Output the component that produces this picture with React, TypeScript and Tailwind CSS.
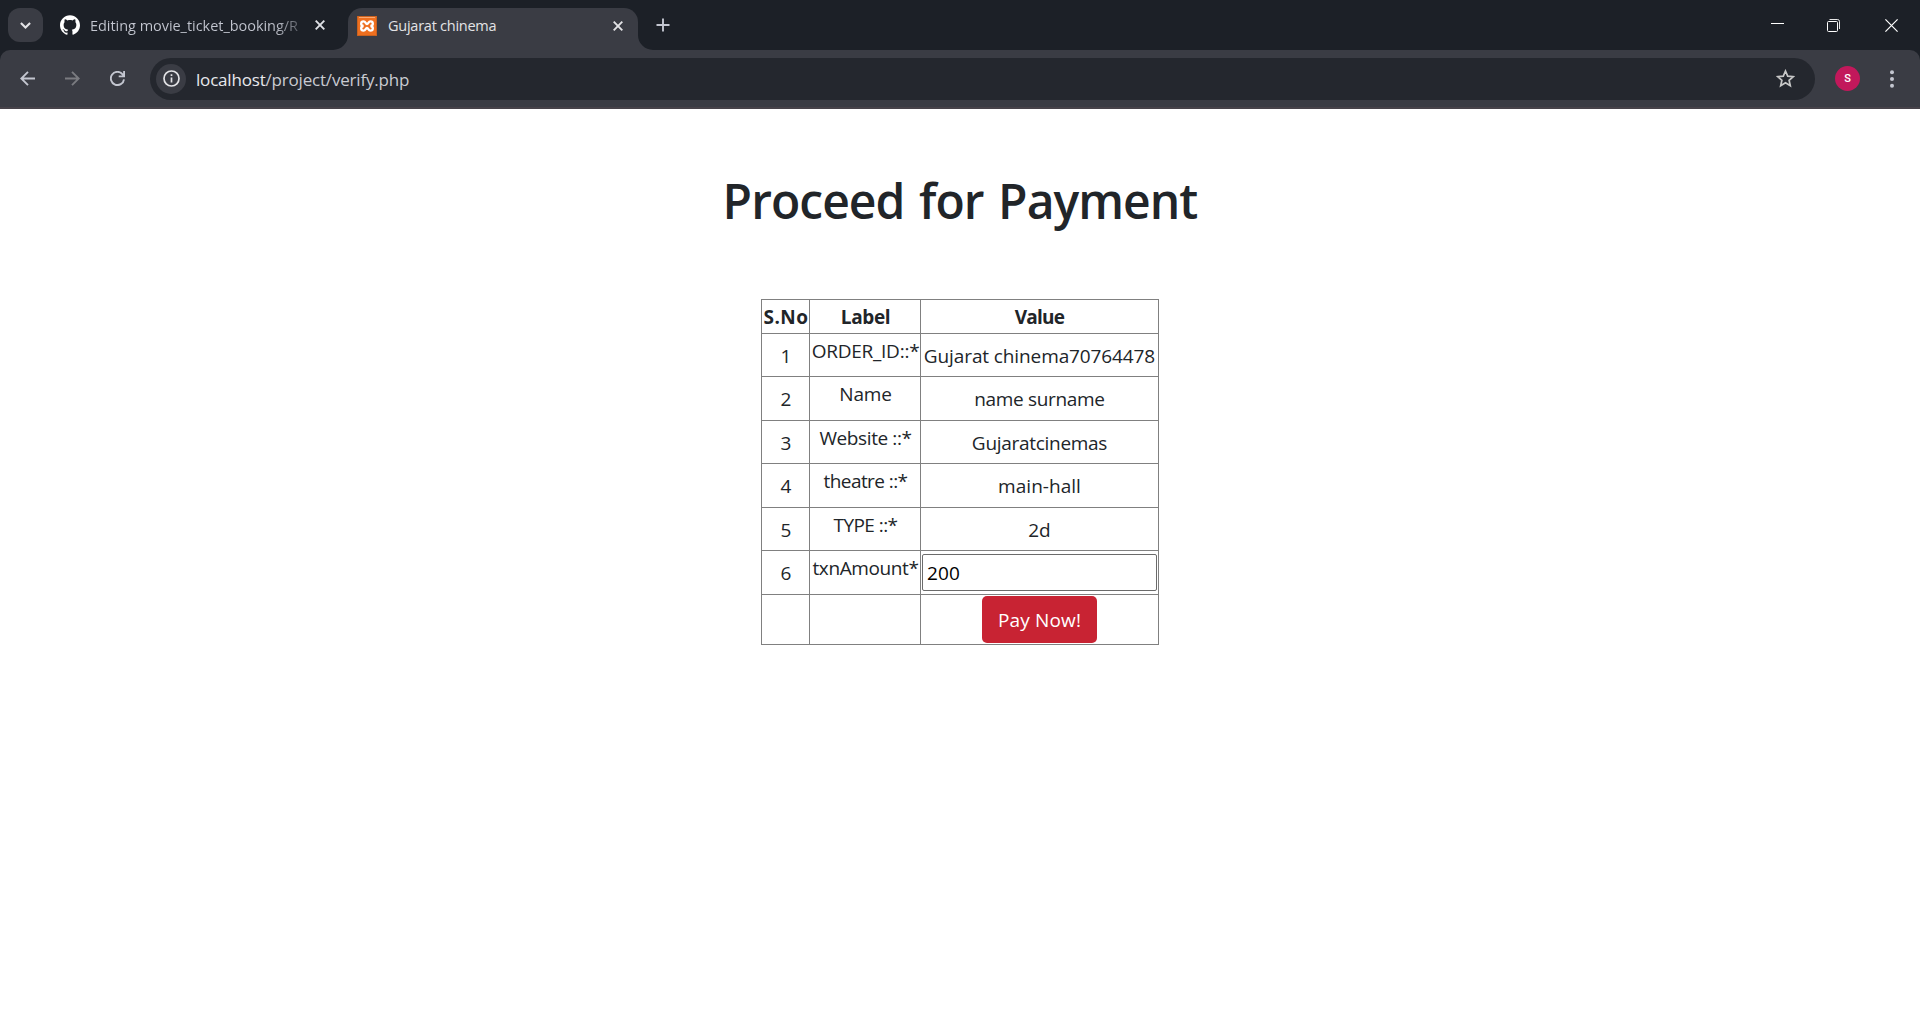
import { SiGithub } from "react-icons/si";

type Row = {
  no: string;
  label: string;
  labelTrack: string;
  value: string;
  valueTrack: string;
  height: string;
};

const rows: Row[] = [
  { no: "1", label: "ORDER_ID::*", labelTrack: "tracking-[-0.25px]", value: "Gujarat chinema70764478", valueTrack: "tracking-[-0.11px]", height: "h-[43px] pt-px" },
  { no: "2", label: "Name", labelTrack: "tracking-[-0.15px]", value: "name surname", valueTrack: "tracking-[-0.33px]", height: "h-11" },
  { no: "3", label: "Website ::*", labelTrack: "tracking-[-0.4px]", value: "Gujaratcinemas", valueTrack: "tracking-[-0.29px]", height: "h-[43px] pt-px" },
  { no: "4", label: "theatre ::*", labelTrack: "tracking-[-0.58px]", value: "main-hall", valueTrack: "tracking-[0.03px]", height: "h-11" },
  { no: "5", label: "TYPE ::*", labelTrack: "tracking-[-0.57px]", value: "2d", valueTrack: "tracking-[0.1px]", height: "h-[43px] pt-px" },
];

const columns = "grid grid-cols-[48px_111px_237px] border-b border-[#808080]";
const cell = "flex items-center justify-center whitespace-nowrap";

function CloseIcon() {
  return (
    <svg className="size-[10px] shrink-0" viewBox="0 0 10 10" fill="none" stroke="currentColor" strokeWidth="1.9">
      <path d="M.7.7l8.6 8.6M9.3.7L.7 9.3" />
    </svg>
  );
}

function XamppIcon() {
  return (
    <svg className="size-5 shrink-0" viewBox="0 0 20 20">
      <rect width="20" height="20" rx="1" fill="#ee6f1f" />
      <rect x=".5" y=".5" width="19" height="19" rx="1" fill="none" stroke="#c9611f" />
      <path d="M2 1.5h16" stroke="#f9a873" />
      <path
        d="M6.500 10C3.200 9.500 3.600 5.300 6.500 5.300c2.300 0 2 2.700 3.500 2.700s1.200-2.700 3.500-2.700c2.900 0 3.300 4.200 0 4.700 3.300.5 2.900 4.700 0 4.700-2.300 0-2-2.700-3.500-2.700s-1.200 2.700-3.500 2.700c-2.900 0-3.300-4.200 0-4.700z"
        fill="none"
        stroke="#fff"
        strokeWidth="2.300"
      />
    </svg>
  );
}

function TabStrip() {
  return (
    <div className="flex h-[50px] items-center bg-[#1c2027] text-[14.5px] text-[#c3c6d0]">
      <button className="ml-2 flex h-[34px] w-[35px] items-center justify-center rounded-xl bg-[#3a3c44] text-[#e3e3e6]">
        <svg className="size-[11px]" viewBox="0 0 11 11" fill="none" stroke="currentColor" strokeWidth="2.1">
          <path d="M.9 3l4.600 4.600L10.100 3" />
        </svg>
      </button>
      <div className="ml-[17px] flex w-[265px] items-center">
        <SiGithub className="size-5 shrink-0 text-white" />
        <span className="ml-[10px] w-[210px] overflow-hidden whitespace-nowrap bg-[linear-gradient(90deg,#c3c6d0_88%,#1c2027_106%)] bg-clip-text pt-px tracking-[-0.04px] text-transparent">
          Editing movie_ticket_booking/R
        </span>
        <span className="ml-[15px] flex text-[#dfe1e6]">
          <CloseIcon />
        </span>
      </div>
      <div className="ml-2 flex items-end self-end text-[#3a3c44]">
        <svg className="h-[15px] w-[15px]" viewBox="0 0 15 15" fill="currentColor">
          <path d="M15 0v15H0A15 15 0 0 0 15 0z" />
        </svg>
        <div className="flex h-[42px] w-[290px] items-center rounded-t-[14px] bg-[#3a3c44] pb-2 pl-[9px] pt-[1px] text-[#e3e3e6]">
          <XamppIcon />
          <span className="ml-[11px] flex-1 whitespace-nowrap tracking-[-0.25px]">Gujarat chinema</span>
          <span className="mr-[15px] flex">
            <CloseIcon />
          </span>
        </div>
        <svg className="h-[15px] w-[15px]" viewBox="0 0 15 15" fill="currentColor">
          <path d="M0 0v15h15A15 15 0 0 1 0 0z" />
        </svg>
      </div>
      <svg className="ml-[3px] size-[14px]" viewBox="0 0 14 14" stroke="currentColor" strokeWidth="1.9">
        <path d="M7 .5v13M.5 7h13" />
      </svg>
      <div className="ml-auto mr-[22px] flex items-center gap-[43px] text-white">
        <svg className="h-[14px] w-[13px]" viewBox="0 0 13 14">
          <path d="M0 5.500h13" stroke="currentColor" />
        </svg>
        <svg className="h-[14px] w-[13px]" viewBox="0 0 13 14" fill="none" stroke="currentColor">
          <path d="M2.500 1.500h8a2 2 0 0 1 2 2v7.500" strokeOpacity=".9" />
          <rect x=".5" y="3.500" width="10" height="10" rx="1" />
        </svg>
        <svg className="ml-[2px] size-[13px]" viewBox="0 0 13 13" stroke="currentColor" strokeWidth="1.200">
          <path d="M.4.4l12.200 12.200M12.600.4L.4 12.600" />
        </svg>
      </div>
    </div>
  );
}

function Toolbar() {
  return (
    <div className="bg-[#1c2027]">
      <div className="flex h-[59px] items-center rounded-t-[10px] border-b-2 border-[#47434a] bg-[#3a3c44] pl-5 text-[#c3c6d0]">
        <svg className="size-[15px]" viewBox="0 0 15 15" fill="none" stroke="currentColor" strokeWidth="1.900">
          <path d="M15 7.500H1.500M8 .8L1.300 7.500 8 14.200" />
        </svg>
        <svg className="ml-[30px] size-[15px] text-[#7a7b80]" viewBox="0 0 15 15" fill="none" stroke="currentColor" strokeWidth="1.900">
          <path d="M0 7.500h13.500M7 .8l6.700 6.700L7 14.200" />
        </svg>
        <svg className="ml-[30px] size-[15px]" viewBox="0 0 15 15" fill="none" stroke="currentColor" strokeWidth="1.900">
          <path d="M14 8.300A6.600 6.600 0 1 1 12.600 3.300L14 5M14.100 0v5.400H8.700" />
        </svg>
        <div className="ml-[25px] flex h-[42px] w-[1665px] items-center rounded-full bg-[#24272e] pl-1.5 pr-5">
          <span className="flex size-[30px] items-center justify-center rounded-full bg-[#3a3c44] text-[#e3e3e6]">
            <svg className="size-[17px]" viewBox="0 0 17 17" fill="none" stroke="currentColor" strokeWidth="1.700">
              <circle cx="8.500" cy="8.500" r="7.500" />
              <path d="M8.500 7.500v5M8.500 4.200v1.900" />
            </svg>
          </span>
          <span className="ml-[10px] pt-0.5 text-[17px] tracking-[-0.19px] text-[#c9cbd2]">
            <span className="text-[#e8e9ed]">localhost</span>/project/verify.php
          </span>
          <svg className="ml-auto h-[19px] w-[19px]" viewBox="0 0 19 19" fill="none" stroke="#c7c7c7" strokeWidth="1.700">
            <path d="M9.500 2l2.200 5.100 5.600.5-4.200 3.700 1.200 5.400-4.800-2.900-4.800 2.900 1.200-5.400-4.200-3.700 5.600-.5z" />
          </svg>
        </div>
        <span className="ml-5 flex size-[25px] items-center justify-center rounded-full bg-[#c2185b] pt-px font-[Roboto,sans-serif] text-[11px] font-medium text-white">
          S
        </span>
        <svg className="ml-[30px] h-[18px] w-1" viewBox="0 0 4 18" fill="currentColor">
          <circle cx="2" cy="2.200" r="2" />
          <circle cx="2" cy="9" r="2" />
          <circle cx="2" cy="15.800" r="2" />
        </svg>
      </div>
    </div>
  );
}

export default function App() {
  return (
    <div className="h-[1020px] overflow-hidden bg-white font-['Open_Sans',sans-serif]">
      <TabStrip />
      <Toolbar />
      <main className="flex flex-col items-center text-[19px] leading-[30px] text-[#212529]">
        <h1 className="mt-[62px] h-[60px] whitespace-nowrap text-[48px] font-semibold leading-[60px] tracking-[-0.95px] [word-spacing:3px]">
          Proceed for Payment
        </h1>
        <div className="mt-[68px] w-[398px] border-x border-t border-[#808080] bg-[linear-gradient(#808080,#808080),linear-gradient(#808080,#808080)] bg-[length:1px_100%,1px_100%] bg-[position:47px_0,158px_0] bg-no-repeat">
          <div className={`${columns} h-[34px] font-bold`}>
            <div className={`${cell} tracking-[0.5px]`}>S.No</div>
            <div className={`${cell} tracking-[-0.36px]`}>Label</div>
            <div className={`${cell} tracking-[-0.75px]`}>Value</div>
          </div>
          {rows.map((row) => (
            <div key={row.no} className={`${columns} ${row.height}`}>
              <div className={cell}>{row.no}</div>
              <div className={`${cell} pb-[10px] ${row.labelTrack}`}>{row.label}</div>
              <div className={`${cell} ${row.valueTrack}`}>{row.value}</div>
            </div>
          ))}
          <div className={`${columns} h-11`}>
            <div className={cell}>6</div>
            <div className={`${cell} pb-[10px] tracking-[-0.39px]`}>txnAmount*</div>
            <div className={cell}>
              <input
                className="h-[37px] w-[235px] rounded-[2px] border border-[#6b6b6b] bg-white px-1 tracking-[0.13px] text-black outline-none"
                defaultValue="200"
              />
            </div>
          </div>
          <div className={`${columns} h-[50px]`}>
            <div />
            <div />
            <div className={cell}>
              <button className="h-[47px] w-[115px] rounded-[5px] bg-[#c82333] tracking-[0.15px] text-white">Pay Now!</button>
            </div>
          </div>
        </div>
      </main>
    </div>
  );
}
